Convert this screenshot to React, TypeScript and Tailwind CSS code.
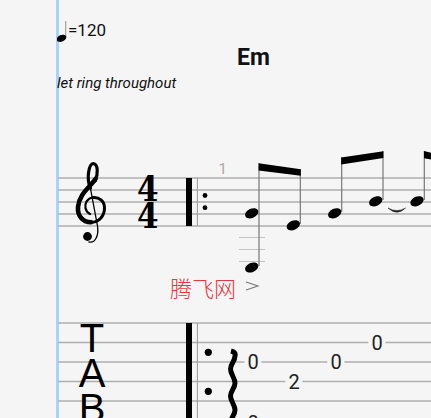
const staffLines = [178, 190, 202, 214, 226];
const tabLines = [323, 342.5, 362, 381.5, 401];
const ledgers = [237.5, 249.5, 261.5];
const heads = [
  [251.7, 213.3],
  [251.7, 267.5],
  [293.3, 225.3],
  [334.7, 213.3],
  [375.7, 201.3],
  [417, 201.3],
];
const stems = [
  [259, 163, 266],
  [300.3, 169, 224],
  [341.7, 157, 212],
  [383, 151, 200],
  [424.3, 151, 200],
];

function Score() {
  return (
    <svg className="absolute left-[-57px] top-0" width="431" height="418" viewBox="0 0 431 418">
      {staffLines.map((y) => (
        <line key={y} x1="58" x2="431" y1={y} y2={y} stroke="#aeaeae" strokeWidth="1.3" />
      ))}
      {tabLines.map((y) => (
        <line key={y} x1="58" x2="431" y1={y} y2={y} stroke="#aeaeae" strokeWidth="1.3" />
      ))}
      {ledgers.map((y) => (
        <line key={y} x1="239" x2="265" y1={y} y2={y} stroke="#c4c4c4" strokeWidth="1" />
      ))}

      {/* clef */}
      <g fill="none" stroke="#000" strokeLinecap="round">
        <path d="M90.5 188 C86 178 89 164 93.3 163.5 C98 164 98.5 174 95 181" strokeWidth="3.2" />
        <path d="M95.5 179 C90 187 79 194 78 207 C77.2 217 84 222.3 91 222.3" strokeWidth="4.6" />
        <path d="M91 222.3 C99 222.3 104.5 216 104.5 208 C104.5 201 99 197 93 197.5" strokeWidth="3" />
        <path d="M93 197.5 C87 198 84.5 204 85.5 208 C86 211 88 213 90 214" strokeWidth="2.2" />
        <path d="M90 186 L97.5 226 C99 236 95 243.5 89 242" strokeWidth="1.3" />
      </g>
      <circle cx="87.5" cy="236.5" r="4.4" fill="#000" />

      {/* bar lines */}
      <rect x="186" y="178" width="6" height="48" fill="#000" />
      <rect x="186" y="323" width="6" height="95" fill="#000" />
      <line x1="197.4" x2="197.4" y1="178" y2="226" stroke="#999" strokeWidth="1" />
      <line x1="197.4" x2="197.4" y1="323" y2="418" stroke="#999" strokeWidth="1" />
      <circle cx="205" cy="195.5" r="2.4" fill="#000" />
      <circle cx="205" cy="207.7" r="2.4" fill="#000" />
      <circle cx="208.3" cy="352.3" r="3.6" fill="#000" />
      <circle cx="208.3" cy="391.3" r="3.6" fill="#000" />

      {/* notes */}
      {stems.map(([x, y1, y2]) => (
        <line key={x} x1={x} x2={x} y1={y1} y2={y2} stroke="#777" strokeWidth="1.2" />
      ))}
      {heads.map(([x, y]) => (
        <ellipse key={x + "-" + y} cx={x} cy={y} rx="7" ry="4.6" transform={`rotate(-24 ${x} ${y})`} fill="#000" />
      ))}
      <polygon points="258.6,163.3 300.8,169.3 300.8,175.8 258.6,170.6" fill="#000" />
      <polygon points="341.2,157.5 383.4,151.2 383.4,158 341.2,164.4" fill="#000" />
      <polygon points="424,151 431,152.7 431,159.4 424,158.3" fill="#000" />
      <path d="M388 208 Q397 216.5 405.5 208 Q397 213 388 208 Z" fill="#222" stroke="#222" strokeWidth="0.5" />
      <path d="M246 282 L258 286 L246 290" fill="none" stroke="#777" strokeWidth="1.1" />

      {/* tempo note */}
      <line x1="65.7" x2="65.7" y1="21" y2="38" stroke="#999" strokeWidth="1.1" />
      <ellipse cx="61.5" cy="38.3" rx="5" ry="3.3" transform="rotate(-24 61.5 38.3)" fill="#000" />

      {/* vibrato */}
      <path
        d="M231 351 C235 352 235.5 354 235 356 C235 361 230.5 364 230.5 369 C230.5 374 235 378 235 383 C235 388 230.5 391 230.5 396 C230.5 401 235 405 235 410 C235 415 230.5 418 230.5 423"
        fill="none"
        stroke="#000"
        strokeWidth="5"
      />
    </svg>
  );
}

function Fret({ x, y, children }: { x: number; y: number; children: string }) {
  return (
    <span
      className="absolute -translate-x-1/2 -translate-y-1/2 bg-[#f5f5f5] px-[3px] text-[20px] leading-[22px] text-[#222]"
      style={{ left: x - 57, top: y }}
    >
      {children}
    </span>
  );
}

export default function App() {
  return (
    <div className="relative h-[418px] w-[431px] overflow-hidden bg-[#f5f5f5] pl-[57px] font-['Roboto',sans-serif] text-[#111]">
      <div className="absolute bottom-0 left-[56px] top-0 w-[2.6px] bg-[#a6d4fd]" />

      <div className="relative flex h-full flex-col overflow-hidden">
        <Score />

        <div className="relative flex flex-col">
          <div className="pl-[11px] pt-[20px] text-[17px] leading-[21px]">=120</div>
          <div className="pl-[180px] pt-[3px] text-[23px] font-bold leading-[27px]">Em</div>
          <div className="pt-[3px] text-[15px] italic leading-[18px]">let ring throughout</div>
        </div>

        <div className="relative flex items-start pl-[80px] pt-[86px]">
          <div className="flex scale-y-[1.12] flex-col font-['DejaVu_Serif',serif] text-[31px] font-bold leading-[24px] text-black">
            <span>4</span>
            <span>4</span>
          </div>
          <span className="ml-[60px] mt-[-18px] text-[15px] leading-[18px] text-[#aaa]">1</span>
        </div>

        <div className="relative ml-[20px] mt-[95px] flex w-[30px] flex-col items-center font-['Liberation_Sans',sans-serif] text-[40px] leading-[35px] text-black">
          <span>T</span>
          <span>A</span>
          <span>B</span>
        </div>

        <span className="absolute left-[113px] top-[273px] font-['Noto_Sans_CJK_SC',sans-serif] text-[22px] font-light leading-[28px] text-[#ea3440]">腾飞网</span>

        <Fret x={253} y={362}>0</Fret>
        <Fret x={294} y={382}>2</Fret>
        <Fret x={336} y={362}>0</Fret>
        <Fret x={377} y={343}>0</Fret>
        <Fret x={253} y={423}>0</Fret>
      </div>
    </div>
  );
}
